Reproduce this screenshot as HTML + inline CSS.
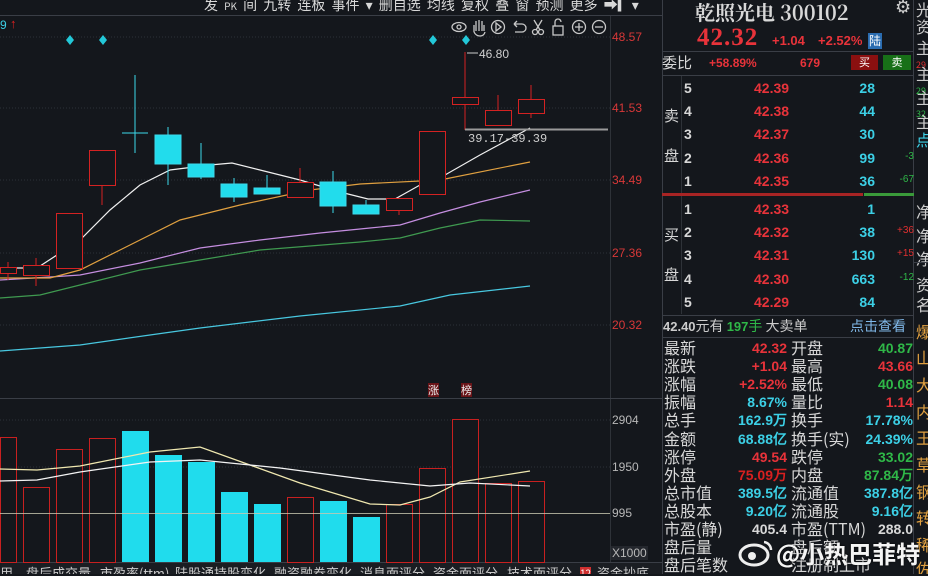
<!DOCTYPE html>
<html><head><meta charset="utf-8"><style>
*{margin:0;padding:0;box-sizing:border-box}
body{width:928px;height:574px;overflow:hidden;background:#14171c;font-family:"Liberation Sans","Noto Sans CJK SC",sans-serif;position:relative;color:#ccc}
.a{position:absolute;white-space:nowrap}
.r{color:#e8333a}.g{color:#2fb848}.c{color:#3cd0e6}.w{color:#d8d8d8}
.cn{font-family:"Noto Sans CJK SC","WenQuanYi Zen Hei",sans-serif}
.num{font-family:"Liberation Sans",sans-serif;font-weight:bold}
</style></head><body>
<svg class="a" style="left:0;top:0" width="662" height="574">
<line x1="0" y1="15.5" x2="662" y2="15.5" stroke="#3a3e46"/>
<line x1="610.5" y1="16" x2="610.5" y2="574" stroke="#2e3238"/>
<g stroke="#2c3038" stroke-dasharray="1 2">
<line x1="0" y1="37" x2="610" y2="37"/><line x1="0" y1="108" x2="610" y2="108"/><line x1="0" y1="180" x2="610" y2="180"/><line x1="0" y1="253" x2="610" y2="253"/><line x1="0" y1="325" x2="610" y2="325"/>
<line x1="0" y1="420" x2="610" y2="420"/><line x1="0" y1="467" x2="610" y2="467"/>
</g>
<line x1="0" y1="398.5" x2="662" y2="398.5" stroke="#3a3e46"/>
<line x1="0" y1="562.5" x2="662" y2="562.5" stroke="#3a3e46"/>
<g fill="#23c8d8"><path d="M70 35l4 5-4 5-4-5z"/><path d="M103 35l4 5-4 5-4-5z"/><path d="M433 35l4 5-4 5-4-5z"/><path d="M466 35l4 5-4 5-4-5z"/></g>
<g fill="none" stroke-width="1.2">
<polyline stroke="#48c8e0" points="0,351 80,345 150,335 200,328 300,316 400,306 450,295 530,286"/>
<polyline stroke="#3f9a50" points="0,298 40,295 80,285 140,270 200,260 260,250 310,246 360,242 400,238 440,228 480,220 530,221"/>
<polyline stroke="#c58ee0" points="0,280 50,277 80,275 140,263 200,248 260,240 320,233 370,228 400,225 440,213 480,202 530,190"/>
<polyline stroke="#e0a040" points="0,278 50,278 80,270 130,245 180,220 240,205 310,190 360,184 440,180 530,162"/>
<polyline stroke="#f0f0f0" points="0,268 37,268 80,240 110,210 140,185 170,170 210,165 232,163 260,170 300,180 340,192 368,199 395,199 420,185 445,175 480,155 530,128"/>
</g>
<g stroke="#d42222" fill="#14171c">
<line x1="8" y1="262" x2="8" y2="280"/><rect x="0.5" y="267.5" width="16" height="6"/>
<line x1="36" y1="258" x2="36" y2="286"/><rect x="23.5" y="265.5" width="26" height="10"/>
<rect x="56.5" y="213.5" width="26" height="55"/>
<line x1="102" y1="185" x2="102" y2="205"/><rect x="89.5" y="150.5" width="26" height="35"/>
<line x1="300" y1="168" x2="300" y2="182"/><rect x="287.5" y="182.5" width="26" height="15"/>
<line x1="399" y1="210" x2="399" y2="215"/><rect x="386.5" y="198.5" width="26" height="12"/>
<rect x="419.5" y="131.5" width="26" height="63"/>
<line x1="465" y1="52" x2="465" y2="130"/><rect x="452.5" y="97.5" width="26" height="7"/>
<line x1="498" y1="95" x2="498" y2="110"/><rect x="485.5" y="110.5" width="26" height="15"/>
<line x1="531" y1="85" x2="531" y2="118"/><rect x="518.5" y="99.5" width="26" height="14"/>
</g>
<g stroke="#3cd8ea" fill="#22dcec">
<line x1="135" y1="75" x2="135" y2="153"/><line x1="122" y1="133" x2="148" y2="133"/>
<line x1="168" y1="127" x2="168" y2="185"/><rect x="155" y="135" width="26" height="29"/>
<line x1="201" y1="143" x2="201" y2="179"/><rect x="188" y="164" width="26" height="13"/>
<line x1="234" y1="178" x2="234" y2="202"/><rect x="221" y="184" width="26" height="13"/>
<line x1="267" y1="175" x2="267" y2="194"/><rect x="254" y="188" width="26" height="6"/>
<line x1="333" y1="171" x2="333" y2="213"/><rect x="320" y="182" width="26" height="24"/>
<line x1="366" y1="200" x2="366" y2="214"/><rect x="353" y="205" width="26" height="9"/>
</g>
<line x1="465" y1="129.5" x2="608" y2="129.5" stroke="#9a9a9a" stroke-width="2"/>
<line x1="467" y1="53" x2="478" y2="53" stroke="#ccc"/>
<text x="479" y="58" fill="#d0d0d0" font-size="12" font-family="Liberation Sans">46.80</text>
<text x="468" y="142" fill="#d0d0d0" font-size="12" font-family="Liberation Mono">39.17-39.39</text>
<g stroke="#c82020" fill="#14171c">
<rect x="0.5" y="437.5" width="16" height="125"/><rect x="23.5" y="487.5" width="26" height="75"/><rect x="56.5" y="449.5" width="26" height="113"/><rect x="89.5" y="438.5" width="26" height="124"/>
<rect x="287.5" y="497.5" width="26" height="65"/><rect x="386.5" y="504.5" width="26" height="58"/><rect x="419.5" y="468.5" width="26" height="94"/><rect x="452.5" y="419.5" width="26" height="143"/><rect x="485.5" y="483.5" width="26" height="79"/><rect x="518.5" y="481.5" width="26" height="81"/>
</g>
<g fill="#20dced">
<rect x="122" y="431" width="27" height="131"/><rect x="155" y="455" width="27" height="107"/><rect x="188" y="462" width="27" height="100"/><rect x="221" y="492" width="27" height="70"/><rect x="254" y="504" width="27" height="58"/><rect x="320" y="501" width="27" height="61"/><rect x="353" y="517" width="27" height="45"/>
</g>
<line x1="0" y1="513.5" x2="610" y2="513.5" stroke="#c8c8b0" opacity=".8"/>
<g fill="none" stroke-width="1.2">
<polyline stroke="#f0e8b0" points="0,469 37,470 80,466 150,452 200,447 250,465 300,483 370,504 400,505 430,497 460,482 530,471"/>
<polyline stroke="#f4f4f4" points="0,481 37,480 80,472 150,462 200,460 280,468 370,480 430,486 470,483 530,486"/>
</g>
<g stroke="#c8c8c8" fill="none" stroke-width="1.3">
<ellipse cx="459" cy="27" rx="7" ry="4.5"/><circle cx="459" cy="27" r="2"/>
<path d="M474 32v-7M476 31v-10M479 31v-11M482 31v-10M484 31v-6M474 32q2 4 6 4t5-4"/>
<circle cx="498" cy="27" r="6.5"/><path d="M496 23v8l5-4z"/>
<path d="M514 24h8a4 4 0 0 1 0 8h-7M514 24l3-3M514 24l3 3"/>
<circle cx="535" cy="32" r="2.5"/><circle cx="541" cy="32" r="2.5"/><path d="M536 30l6-10M540 30l-6-10"/>
<rect x="553" y="26" width="10" height="9"/><path d="M555 26v-4a3 3 0 0 1 6 0"/>
<circle cx="579" cy="27" r="6.5"/><path d="M575 27h8M579 23v8"/>
<circle cx="599" cy="27" r="6.5"/><path d="M595 27h8"/>
</g>
</svg>
<div class="a c" style="left:0;top:18px;font-size:12px">9</div>
<div class="a" style="left:10px;top:16px;font-size:13px;color:#e02020;font-weight:bold">↑</div>
<div class="a cn" style="left:204px;top:-5px;font-size:14px;color:#d8d8d8;word-spacing:3px">发 <span style="font-size:10px">PK</span> 间 九转 连板 事件 ▾ 删自选 均线 复权 叠 窗 预测 更多 ➡▎▾</div>
<div class="a" style="left:612px;top:30px;font-size:12px;color:#d83838">48.57</div>
<div class="a" style="left:612px;top:101px;font-size:12px;color:#d83838">41.53</div>
<div class="a" style="left:612px;top:173px;font-size:12px;color:#d83838">34.49</div>
<div class="a" style="left:612px;top:246px;font-size:12px;color:#d83838">27.36</div>
<div class="a" style="left:612px;top:318px;font-size:12px;color:#d83838">20.32</div>
<div class="a" style="left:612px;top:413px;font-size:12px;color:#b8b8b8">2904</div>
<div class="a" style="left:612px;top:460px;font-size:12px;color:#b8b8b8">1950</div>
<div class="a" style="left:612px;top:506px;font-size:12px;color:#b8b8b8">995</div>
<div class="a" style="left:611px;top:546px;font-size:12px;color:#b8b8b8;background:#24272d;padding:0 1px">X1000</div>
<div class="a cn" style="left:428px;top:383px;font-size:11px;background:#6a1418;color:#eee;line-height:14px">涨</div>
<div class="a cn" style="left:461px;top:383px;font-size:11px;background:#6a1418;color:#eee;line-height:14px">榜</div>
<div class="a cn" style="left:0;top:563px;height:11px;overflow:hidden;width:662px;font-size:13px;line-height:20px;color:#ccc;background:#1a1d22">
<span style="position:absolute;left:0">用</span><span style="position:absolute;left:26px">盘后成交量</span><span style="position:absolute;left:100px">市盈率(ttm)</span><span style="position:absolute;left:175px">陆股通持股变化</span><span style="position:absolute;left:274px">融资融券变化</span><span style="position:absolute;left:360px">消息面评分</span><span style="position:absolute;left:433px">资金面评分</span><span style="position:absolute;left:507px">技术面评分</span><span style="position:absolute;left:580px;background:#d03030;color:#fff;font-size:10px;top:4px;line-height:12px">12</span><span style="position:absolute;left:597px">资金抄底</span>
</div>
<div class="a" style="left:662px;top:0;width:1px;height:574px;background:#3a3e46"></div>
<div class="a" style="left:913px;top:0;width:1px;height:574px;background:#3a3e46"></div>
<div class="a" style="left:695px;top:-3px;font-size:20px;font-weight:bold;color:#d8d8d8;font-family:'Noto Serif CJK SC','Liberation Serif',serif">乾照光电 300102</div>
<div class="a" style="left:895px;top:-3px;font-size:18px;color:#ccc">⚙</div>
<div class="a" style="left:697px;top:24px;font-size:25px;font-weight:bold;color:#e8333a;font-family:'Liberation Serif',serif;letter-spacing:1px">42.32</div>
<div class="a num r" style="left:772px;top:33px;font-size:13px">+1.04</div>
<div class="a num r" style="left:818px;top:33px;font-size:13px">+2.52%</div>
<div class="a cn" style="left:868px;top:33px;font-size:12px;background:#2a6cb0;color:#fff;line-height:16px;padding:0 1px">陆</div>
<div class="a" style="left:662px;top:51px;width:251px;height:1px;background:#3a3e46"></div>
<div class="a cn w" style="left:662px;top:52px;font-size:15px">委比</div>
<div class="a num r" style="left:709px;top:56px;font-size:12px">+58.89%</div>
<div class="a num r" style="left:800px;top:56px;font-size:12px">679</div>
<div class="a cn" style="left:851px;top:55px;width:27px;height:15px;background:#8a1010;color:#fff;font-size:11px;text-align:center;line-height:15px">买</div>
<div class="a cn" style="left:883px;top:55px;width:28px;height:15px;background:#187018;color:#fff;font-size:11px;text-align:center;line-height:15px">卖</div>
<div class="a" style="left:662px;top:75px;width:251px;height:1px;background:#3a3e46"></div>
<div class="a" style="left:681px;top:76px;width:1px;height:238px;background:#2e3238"></div>
<div class="a cn w" style="left:664px;top:105px;font-size:15px">卖</div>
<div class="a cn w" style="left:664px;top:145px;font-size:15px">盘</div>
<div class="a cn w" style="left:664px;top:224px;font-size:15px">买</div>
<div class="a cn w" style="left:664px;top:264px;font-size:15px">盘</div>
<div id="ob"></div>
<div class="a" style="left:662px;top:193px;width:201px;height:3px;background:#a82424"></div>
<div class="a" style="left:864px;top:193px;width:50px;height:3px;background:#3a9a3a"></div>
<div class="a" style="left:662px;top:315px;width:251px;height:1px;background:#3a3e46"></div>
<div class="a cn" style="left:663px;top:316px;font-size:14px;color:#ccc"><span class="num" style="font-size:13px">42.40</span>元有 <span class="g"><span class="num" style="font-size:13px">197</span>手</span> 大卖单</div>
<div class="a cn" style="left:850px;top:316px;font-size:14px;color:#80b8e8">点击查看</div>
<div class="a" style="left:662px;top:337px;width:251px;height:1px;background:#3a3e46"></div>
<div id="st"></div>
<div class="a cn" style="left:916px;top:0;width:12px;height:574px;overflow:hidden;font-size:16px;line-height:18px;color:#ccc">
<div style="position:absolute;top:0">光</div><div style="position:absolute;top:17px">资</div>
<div style="position:absolute;top:38px">主</div><div style="position:absolute;top:56px;font-size:9px;color:#e03030">29</div>
<div style="position:absolute;top:64px">主</div><div style="position:absolute;top:82px;font-size:9px;color:#2fb848">29</div>
<div style="position:absolute;top:88px">主</div><div style="position:absolute;top:105px;font-size:9px;color:#2fb848">32</div>
<div style="position:absolute;top:112px">主</div><div style="position:absolute;top:130px;color:#3cd0e6">点</div>
<div style="position:absolute;top:202px">净</div><div style="position:absolute;top:226px">净</div><div style="position:absolute;top:249px">净</div>
<div style="position:absolute;top:275px">资</div><div style="position:absolute;top:295px">名</div>
<div style="color:#e0a040;position:absolute;top:322px">爆</div><div style="color:#e0a040;position:absolute;top:348px">山</div><div style="color:#e0a040;position:absolute;top:375px">大</div><div style="color:#e0a040;position:absolute;top:402px">内</div><div style="color:#e0a040;position:absolute;top:428px">王</div><div style="color:#e0a040;position:absolute;top:455px">草</div><div style="color:#e0a040;position:absolute;top:482px">钢</div><div style="color:#e0a040;position:absolute;top:508px">转</div><div style="color:#e0a040;position:absolute;top:535px">稀</div><div style="color:#e0a040;position:absolute;top:559px">佐</div>
</div>
<div class="a" style="left:913px;top:262px;width:15px;height:1px;background:#3a3e46"></div>
<script>
var ob=[["5","42.39","28",""],["4","42.38","44",""],["3","42.37","30",""],["2","42.36","99","-3"],["1","42.35","36","-67"],["1","42.33","1",""],["2","42.32","38","+36"],["3","42.31","130","+15"],["4","42.30","663","-12"],["5","42.29","84",""]];
var ys=[80,103,126,150,173,201,224,247,271,294],h="";
ob.forEach(function(r,i){var y=ys[i];
h+='<div class="a num w" style="left:684px;top:'+y+'px;font-size:14px">'+r[0]+'</div>';
h+='<div class="a num r" style="left:754px;top:'+y+'px;font-size:14px">'+r[1]+'</div>';
h+='<div class="a num c" style="right:53px;top:'+y+'px;font-size:14px">'+r[2]+'</div>';
if(r[3])h+='<div class="a" style="right:14px;top:'+(y+1)+'px;font-size:10px;color:'+(r[3][0]=="+"?"#e03030":"#2fb848")+'">'+r[3]+'</div>';});
document.getElementById("ob").outerHTML=h;
var st=[["最新","42.32","r","开盘","40.87","g"],["涨跌","+1.04","r","最高","43.66","r"],["涨幅","+2.52%","r","最低","40.08","g"],["振幅","8.67%","c","量比","1.14","r"],["总手","162.9万","c","换手","17.78%","c"],["金额","68.88亿","c","换手(实)","24.39%","c"],["涨停","49.54","r","跌停","33.02","g"],["外盘","75.09万","dr","内盘","87.84万","g"],["总市值","389.5亿","c","流通值","387.8亿","c"],["总股本","9.20亿","c","流通股","9.16亿","c"],["市盈(静)","405.4","w","市盈(TTM)","288.0","w"],["盘后量","","w","盘后额","","w"],["盘后笔数","","w","注册制上市","","w"]];
h="";st.forEach(function(r,i){var y=337+i*18.1;
var col=function(c){return c=="dr"?"color:#d82020":""};
h+='<div class="a cn w" style="left:664px;top:'+y+'px;font-size:16px;line-height:20px">'+r[0]+'</div>';
h+='<div class="a num '+r[2]+'" style="right:141px;top:'+(y+2)+'px;font-size:14px;line-height:18px;'+col(r[2])+'">'+r[1]+'</div>';
h+='<div class="a cn w" style="left:791px;top:'+y+'px;font-size:16px;line-height:20px">'+r[3]+'</div>';
h+='<div class="a num '+r[5]+'" style="right:15px;top:'+(y+2)+'px;font-size:14px;line-height:18px">'+r[4]+'</div>';});
document.getElementById("st").outerHTML=h;
</script>
<svg class="a" style="left:738px;top:538px" width="36" height="30"><ellipse cx="16" cy="17" rx="14" ry="10" fill="none" stroke="#eee" stroke-width="3"/><circle cx="14" cy="18" r="4" fill="#eee"/><path d="M26 4a8 8 0 0 1 7 8" stroke="#eee" stroke-width="2.5" fill="none"/></svg>
<div class="a cn" style="left:776px;top:535px;font-size:24px;color:#f4f4f4;font-weight:bold;text-shadow:0 0 2px #000">@小热巴菲特</div>
</body></html>
